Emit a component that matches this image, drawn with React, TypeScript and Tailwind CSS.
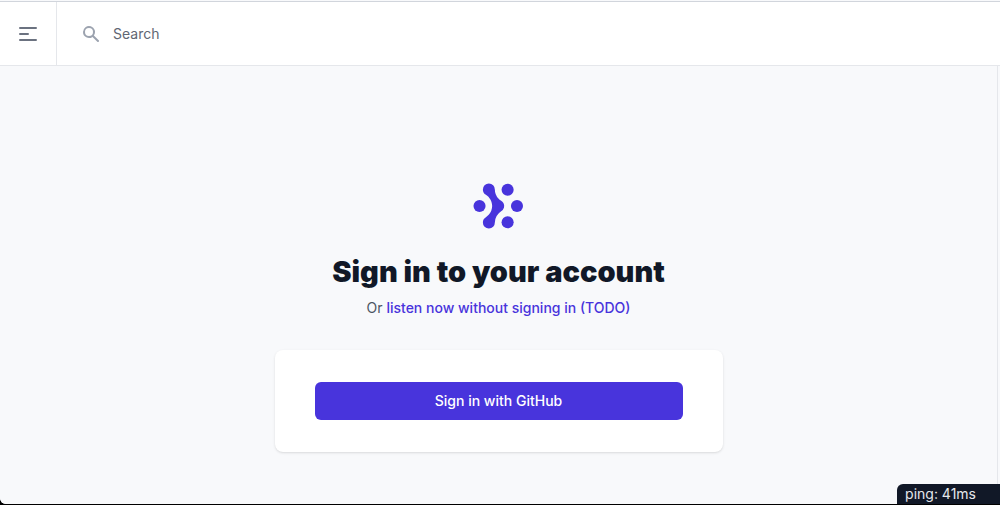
import React from "react";

function LogoMark() {
  return (
    <svg className="mx-auto h-12 w-auto text-[#4834dc]" viewBox="0 0 35 32" fill="currentColor" role="img" aria-label="Logo">
      <path d="M15.258 26.865a4.043 4.043 0 01-1.133 2.917A4.006 4.006 0 0111.253 31a3.992 3.992 0 01-2.872-1.218 4.028 4.028 0 01-1.133-2.917c.009-.698.2-1.382.557-1.981.356-.6.863-1.094 1.47-1.433-.024.109.09-.055 0 0l1.86-1.652a8.495 8.495 0 002.304-5.793c0-2.926-1.711-5.901-4.17-7.457.094.055-.036-.094 0 0A3.952 3.952 0 017.8 7.116a3.975 3.975 0 01-.557-1.98 4.042 4.042 0 011.133-2.918A4.006 4.006 0 0111.247 1a3.99 3.99 0 012.872 1.218 4.025 4.025 0 011.133 2.917 8.521 8.521 0 002.347 5.832l.817.8c.326.285.668.551 1.024.798.621.33 1.142.826 1.504 1.431a3.902 3.902 0 01-1.504 5.442c.033-.067-.063.036 0 0a8.968 8.968 0 00-3.024 3.183 9.016 9.016 0 00-1.158 4.244z" />
      <circle cx="23.74" cy="5.13" r="4.03" />
      <circle cx="23.74" cy="26.87" r="4.03" />
      <circle cx="29.99" cy="16" r="4.03" />
      <circle cx="5.01" cy="16" r="4.03" />
    </svg>
  );
}

function Header() {
  return (
    <header className="flex h-16 shrink-0 border-b border-gray-200 bg-white">
      <button type="button" aria-label="Open sidebar" className="border-r border-gray-200 px-4 text-[#6b7280]">
        <svg className="size-6" viewBox="0 0 24 24" fill="none" stroke="currentColor" strokeWidth="2" strokeLinecap="round" strokeLinejoin="round" aria-hidden="true">
          <path d="M4 6h16M4 12h8m-8 6h16" />
        </svg>
      </button>
      <form className="flex flex-1 items-center gap-3 pl-6" onSubmit={(event) => event.preventDefault()}>
        <label htmlFor="search" aria-label="Search" className="text-[#9ca3af]">
          <svg className="size-5" viewBox="0 0 20 20" fill="currentColor" aria-hidden="true">
            <path fillRule="evenodd" clipRule="evenodd" d="M8 4a4 4 0 100 8 4 4 0 000-8zM2 8a6 6 0 1110.89 3.476l4.817 4.817a1 1 0 01-1.414 1.414l-4.816-4.816A6 6 0 012 8z" />
          </svg>
        </label>
        <input id="search" type="text" placeholder="Search" className="h-full min-w-0 flex-1 text-sm text-gray-900 outline-none placeholder:text-[#5f6673]" />
      </form>
    </header>
  );
}

function SignIn() {
  return (
    <main className="flex-1 border-r border-gray-200 bg-[#f8f9fb] px-4 pt-29 pb-12">
      <div className="mx-auto max-w-md">
        <LogoMark />
        <h1 className="mt-6 text-center text-[29px] leading-9 font-black text-[#111827]">Sign in to your account</h1>
        <p className="mt-2 text-center text-sm text-[#4b5563]">
          Or{" "}
          <a href="#listen" className="font-medium text-[#4834dc]">
            listen now without signing in (TODO)
          </a>
        </p>
        <div className="mt-8 rounded-lg bg-white px-10 py-8 shadow-sm">
          <button type="button" className="w-full rounded-md border border-transparent bg-[#4834dc] px-4 py-2 text-sm font-medium text-white">
            Sign in with GitHub
          </button>
        </div>
      </div>
    </main>
  );
}

export default function App() {
  return (
    <div className="flex min-h-screen flex-col bg-black pb-px font-['Inter',sans-serif]">
      <div className="relative flex flex-1 flex-col overflow-hidden rounded-bl-md bg-[#f8f9fb] pt-px">
        <div className="flex flex-1 flex-col border-t border-gray-300">
          <Header />
          <div className="flex flex-1 pr-0.5">
            <SignIn />
          </div>
        </div>
        <div className="absolute right-0 bottom-0 rounded-tl-md bg-[#111827] pr-6 pl-2 text-sm text-gray-200">ping: 41ms</div>
      </div>
    </div>
  );
}
